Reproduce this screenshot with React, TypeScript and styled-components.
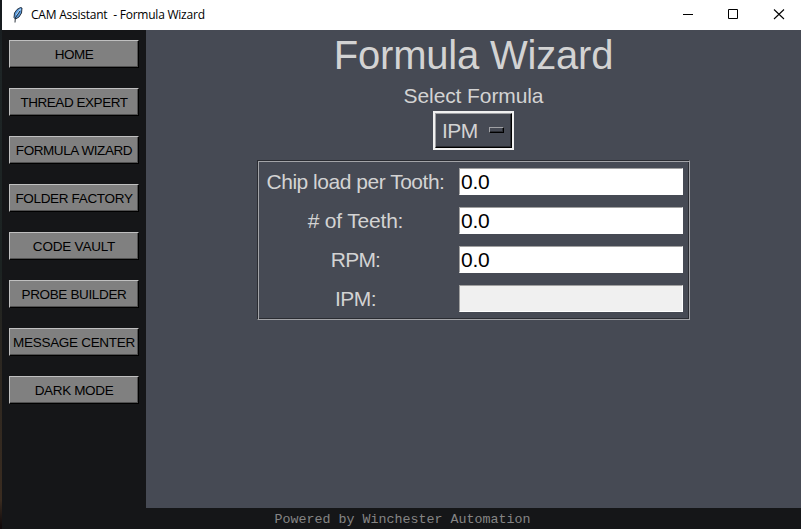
import React from "react";
import styled, { createGlobalStyle } from "styled-components";

const GlobalStyle = createGlobalStyle`
  * { box-sizing: border-box; }
  body { margin: 0; overflow: hidden; background: #151618; }
`;

const Desktop = styled.div`
  display: flex;
  width: 801px;
  height: 529px;
  padding-left: 2px;
  background: linear-gradient(#15191d 0, #1e2526 70px, #1c2322 270px, #2b2721 350px, #3a2c20 500px, #120b0c 526px);
  font-family: "Liberation Sans", Arial, sans-serif;
`;

const Window = styled.div`
  display: flex;
  flex-direction: column;
  width: 799px;
  height: 529px;
  background: #151618;
`;

const TitleBar = styled.header`
  display: flex;
  align-items: center;
  height: 30px;
  padding-left: 10px;
  background: #fff;
`;

const TitleText = styled.span`
  flex: 1;
  margin-left: 7px;
  white-space: pre;
  color: #000;
  font: 12px/30px "Open Sans", "Noto Sans", sans-serif;
  letter-spacing: -0.23px;
`;

const Controls = styled.div`
  display: flex;
  width: 138px;
  height: 30px;
`;

const ControlButton = styled.div`
  display: flex;
  width: 46px;
  height: 30px;
  padding: 9px 0 0 18px;
`;

const Body = styled.div`
  display: flex;
  height: 478px;
`;

const Sidebar = styled.nav`
  display: flex;
  flex-direction: column;
  gap: 20px;
  width: 144px;
  padding: 10px 7px;
`;

const NavButton = styled.button<{ $spacing: number }>`
  width: 130px;
  height: 28px;
  padding: 0;
  border: 1px solid;
  border-color: #c0c0c0 #000 #000 #c0c0c0;
  border-radius: 0;
  box-shadow: inset -1px -1px #505050;
  background: #808080;
  color: #000;
  font: 13.5px/27px "Liberation Sans", Arial, sans-serif;
  letter-spacing: ${(p) => p.$spacing}px;
  white-space: nowrap;
`;

const Panel = styled.main`
  display: flex;
  flex-direction: column;
  align-items: center;
  width: 655px;
  background: #464a54;
  color: #d3d3d3;
`;

const Heading = styled.h1`
  height: 50px;
  margin: 0;
  font-size: 40px;
  font-weight: 400;
  letter-spacing: -0.2px;
  line-height: 51px;
`;

const Prompt = styled.div`
  height: 31px;
  font-size: 21px;
  letter-spacing: -0.1px;
  line-height: 32px;
`;

const OptionMenu = styled.div`
  display: flex;
  width: 81px;
  height: 39px;
  border: 2px solid #f0f0f0;
`;

const OptionFace = styled.div`
  display: flex;
  align-items: center;
  justify-content: space-between;
  flex: 1;
  padding: 0 7px 0 6px;
  border: 1px solid;
  border-color: #a0a1a5 #000 #000 #a0a1a5;
  box-shadow: inset -1px -1px #2b2d33;
  font-size: 21px;
  letter-spacing: -0.6px;
`;

const Indicator = styled.span`
  width: 15px;
  height: 6px;
  margin-bottom: 1px;
  border: 1px solid;
  border-color: #a0a1a5 #000 #000 #a0a1a5;
  box-shadow: inset -1px -1px #2b2d33;
`;

const Fields = styled.section`
  display: flex;
  flex-direction: column;
  gap: 12px;
  width: 433px;
  height: 160px;
  margin-top: 10px;
  padding-top: 7px;
  border: 1px solid;
  border-color: #2a2c32 #a3a4a8 #a3a4a8 #2a2c32;
  box-shadow: inset 1px 1px #a3a4a8, inset -1px -1px #2a2c32;
`;

const Field = styled.label`
  display: flex;
  height: 27px;
  padding-right: 6px;
`;

const FieldLabel = styled.span<{ $spacing: number }>`
  width: 195px;
  margin-right: 6px;
  text-align: center;
  font-size: 21px;
  line-height: 28px;
  letter-spacing: ${(p) => p.$spacing}px;
`;

const Entry = styled.input`
  width: 224px;
  height: 27px;
  padding: 1px 0 0 1px;
  border: 1px solid;
  border-color: #a0a0a0 #fff #fff #a0a0a0;
  border-radius: 0;
  outline: 0;
  background: #fff;
  color: #000;
  font: 21px "Liberation Sans", Arial, sans-serif;
  letter-spacing: -0.3px;
  &:read-only { background: #f0f0f0; }
`;

const Footer = styled.footer`
  height: 21px;
  padding-left: 2px;
  color: #858585;
  font: 13.33px/23px "Liberation Mono", "Courier New", monospace;
  text-align: center;
`;

const Feather = () => (
  <svg width="12" height="18" viewBox="0 0 12 18">
    <path d="M8.5 1.5 10 2 9.5 7 7 11 3.5 13 2 11.5 2.5 7 5 3.5Z" fill="#5b9bdc" stroke="#17212f" strokeWidth="0.9" />
    <path d="M8.5 3 4.5 9" stroke="#b7d9f5" strokeWidth="1.3" />
    <path d="M8 5 3.3 12 3 16.5" fill="none" stroke="#18202a" strokeWidth="0.9" />
  </svg>
);

const navigation: [string, number][] = [
  ["HOME", -0.5],
  ["THREAD EXPERT", -0.45],
  ["FORMULA WIZARD", -0.42],
  ["FOLDER FACTORY", -0.33],
  ["CODE VAULT", -0.2],
  ["PROBE BUILDER", -0.35],
  ["MESSAGE CENTER", -0.3],
  ["DARK MODE", -0.35],
];

const fields = [
  { label: "Chip load per Tooth:", spacing: -0.48, value: "0.0" },
  { label: "# of Teeth:", spacing: -0.2, value: "0.0" },
  { label: "RPM:", spacing: -0.8, value: "0.0" },
  { label: "IPM:", spacing: -0.6, value: "", readOnly: true },
];

export default function App() {
  return (
    <Desktop>
      <GlobalStyle />
      <Window>
        <TitleBar>
          <Feather />
          <TitleText>{"CAM Assistant  - Formula Wizard"}</TitleText>
          <Controls>
            <ControlButton>
              <svg width="12" height="12"><path d="M2 5.5h10" stroke="#000" /></svg>
            </ControlButton>
            <ControlButton>
              <svg width="12" height="12"><path d="M1.5.5h9v9h-9z" fill="none" stroke="#000" /></svg>
            </ControlButton>
            <ControlButton>
              <svg width="12" height="12"><path d="m1 .5 10 9.5M11 .5 1 10" stroke="#000" strokeWidth="1.1" /></svg>
            </ControlButton>
          </Controls>
        </TitleBar>
        <Body>
          <Sidebar>
            {navigation.map(([label, spacing]) => (
              <NavButton key={label} $spacing={spacing}>{label}</NavButton>
            ))}
          </Sidebar>
          <Panel>
            <Heading>Formula Wizard</Heading>
            <Prompt>Select Formula</Prompt>
            <OptionMenu>
              <OptionFace>IPM<Indicator /></OptionFace>
            </OptionMenu>
            <Fields>
              {fields.map((f) => (
                <Field key={f.label}>
                  <FieldLabel $spacing={f.spacing}>{f.label}</FieldLabel>
                  <Entry defaultValue={f.value} readOnly={f.readOnly} />
                </Field>
              ))}
            </Fields>
          </Panel>
        </Body>
        <Footer>Powered by Winchester Automation</Footer>
      </Window>
    </Desktop>
  );
}
